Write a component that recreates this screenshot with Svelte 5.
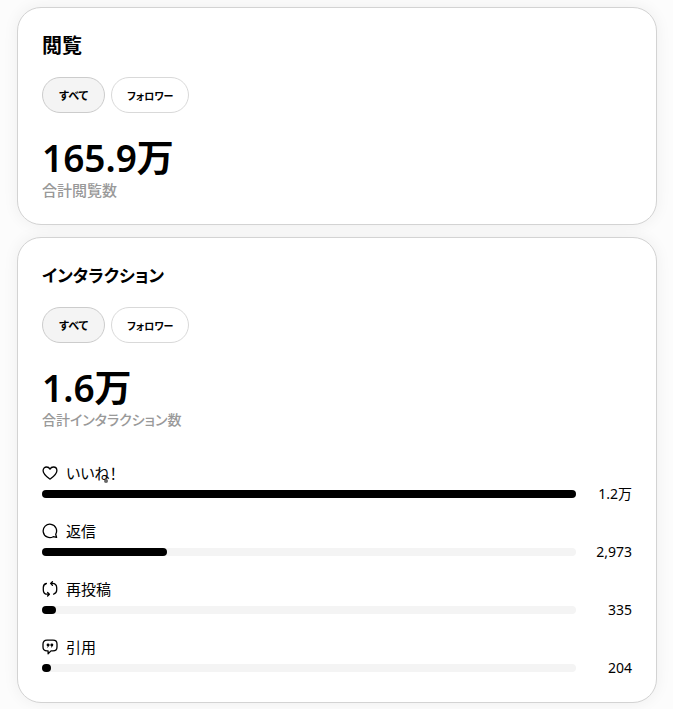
<script lang="ts">
  type Filter = 'all' | 'followers';

  const filters: { id: Filter; label: string }[] = [
    { id: 'all', label: 'すべて' },
    { id: 'followers', label: 'フォロワー' }
  ];

  const interactions = [
    { icon: 'like', label: 'いいね！', value: '1.2万', percent: 100 },
    { icon: 'reply', label: '返信', value: '2,973', percent: 23.4 },
    { icon: 'repost', label: '再投稿', value: '335', percent: 2.6 },
    { icon: 'quote', label: '引用', value: '204', percent: 1.7 }
  ];

  let viewsFilter = $state<Filter>('all');
  let interactionsFilter = $state<Filter>('all');
</script>

{#snippet chips(selected: Filter, select: (id: Filter) => void)}
  <div class="chips">
    {#each filters as filter (filter.id)}
      <button
        type="button"
        class="chip {filter.id}"
        class:selected={selected === filter.id}
        aria-pressed={selected === filter.id}
        onclick={() => select(filter.id)}
      >
        {filter.label}
      </button>
    {/each}
  </div>
{/snippet}

{#snippet icon(name: string)}
  <svg class="icon" viewBox="0 0 16 16" aria-hidden="true">
    {#if name === 'like'}
      <path d="M8 14.2C5.2 12 1.1 9.2 1.1 5.7C1.1 3.5 2.7 2 4.6 2C6.1 2 7.3 2.8 8 4.1C8.7 2.8 9.9 2 11.4 2C13.3 2 14.9 3.5 14.9 5.7C14.9 9.2 10.8 12 8 14.2Z" />
    {:else if name === 'reply'}
      <path d="M13.7 11.2A6.7 6.7 0 1 0 11.2 13.7L14.6 14.4Z" />
    {:else if name === 'repost'}
      <path d="M4.4 2.5C2.3 3 1.3 4.6 1.3 6.6V8.9C1.3 11.6 3 13.2 5.6 13.2H7M5.6 11.4L7.4 13.2L5.6 15" />
      <path d="M11.6 13.1C13.7 12.6 14.7 11 14.7 9V6.7C14.7 4 13 2.4 10.4 2.4H9M10.4 0.7L8.6 2.4L10.4 4.2" />
    {:else}
      <path d="M5 1.2H11C13.7 1.2 15 2.7 15 5V8C15 10.5 13.7 11.9 11 11.9H9L6.1 14.7V11.9H5C2.3 11.9 1 10.5 1 8V5C1 2.7 2.3 1.2 5 1.2Z" />
      <g class="marks">
        <circle cx="6" cy="5.9" r="1.4" />
        <circle cx="9.8" cy="5.9" r="1.4" />
        <path d="M7 5.8Q7.1 7.5 5.6 8.1M10.8 5.8Q10.9 7.5 9.4 8.1" />
      </g>
    {/if}
  </svg>
{/snippet}

<main>
  <section class="card">
    <h2>閲覧</h2>
    {@render chips(viewsFilter, (id) => (viewsFilter = id))}
    <p class="total">165.9万</p>
    <p class="caption">合計閲覧数</p>
  </section>

  <section class="card compact">
    <h2>インタラクション</h2>
    {@render chips(interactionsFilter, (id) => (interactionsFilter = id))}
    <p class="total">1.6万</p>
    <p class="caption">合計インタラクション数</p>

    <ul class="breakdown">
      {#each interactions as item (item.icon)}
        <li>
          <div class="label">
            {@render icon(item.icon)}
            <span>{item.label}</span>
            {#if item.icon === 'like'}
              <i class="dot"></i>
            {/if}
          </div>
          <div class="meter">
            <div class="track">
              <div class="fill" style="width: {item.percent}%"></div>
            </div>
            <span class="value">{item.value}</span>
          </div>
        </li>
      {/each}
    </ul>
  </section>
</main>

<style>
  :global(body) {
    margin: 0;
    background: #fcfcfc;
  }

  main {
    display: flex;
    flex-direction: column;
    gap: 12px;
    padding: 7px 16px 6px 17px;
    color: #000;
    font-family: 'Noto Sans', 'Noto Sans CJK JP', sans-serif;
    font-feature-settings: 'palt';
  }

  .card {
    padding: 24px;
    border: 1px solid #d3d3d3;
    border-radius: 24px;
    background: #fff;
    box-shadow: 0 0 16px rgb(0 0 0 / 0.06);
  }

  h2 {
    margin: 0 0 17px;
    font-size: 20px;
    font-weight: 600;
    line-height: 28px;
  }

  .compact h2 {
    font-size: 17px;
  }

  .chips {
    display: flex;
    gap: 6px;
  }

  .chip {
    height: 36px;
    padding: 0 16px;
    border: 1px solid #d9d9d9;
    border-radius: 18px;
    background: #fff;
    color: #000;
    font-family: inherit;
    font-feature-settings: inherit;
    font-size: 11px;
    font-weight: 600;
    cursor: pointer;
  }

  .chip.followers {
    padding: 0 15px;
    font-size: 10px;
  }

  .chip.selected {
    border-color: #ccc;
    background: #f4f4f4;
  }

  .total {
    margin: 23px 0 0;
    font-size: 37px;
    font-weight: 600;
    line-height: 44px;
  }

  .caption {
    margin: 0;
    color: #999;
    font-size: 15px;
    font-weight: 500;
    line-height: 20px;
  }

  .compact .caption {
    font-size: 14px;
  }

  .breakdown {
    display: flex;
    flex-direction: column;
    gap: 16px;
    margin: 32px 0 0;
    padding: 0;
    list-style: none;
  }

  .label {
    position: relative;
    display: flex;
    align-items: center;
    gap: 8px;
    font-size: 15px;
    line-height: 22px;
  }

  .icon {
    width: 16px;
    height: 16px;
    fill: none;
    stroke: #000;
    stroke-width: 1.3;
    stroke-linecap: round;
    stroke-linejoin: round;
  }

  .marks circle {
    fill: #000;
    stroke: none;
  }

  .marks path {
    stroke-width: 1;
  }

  .dot {
    position: absolute;
    top: 17px;
    left: 62px;
    width: 4px;
    height: 4px;
    border-radius: 50%;
    background: #666;
  }

  .meter {
    display: flex;
    align-items: center;
    font-size: 14px;
    line-height: 20px;
  }

  .track {
    flex: 1;
    height: 8px;
    border-radius: 4px;
    background: #f4f4f4;
  }

  .fill {
    height: 100%;
    border-radius: 4px;
    background: #000;
  }

  .value {
    width: 56px;
    text-align: right;
  }
</style>
